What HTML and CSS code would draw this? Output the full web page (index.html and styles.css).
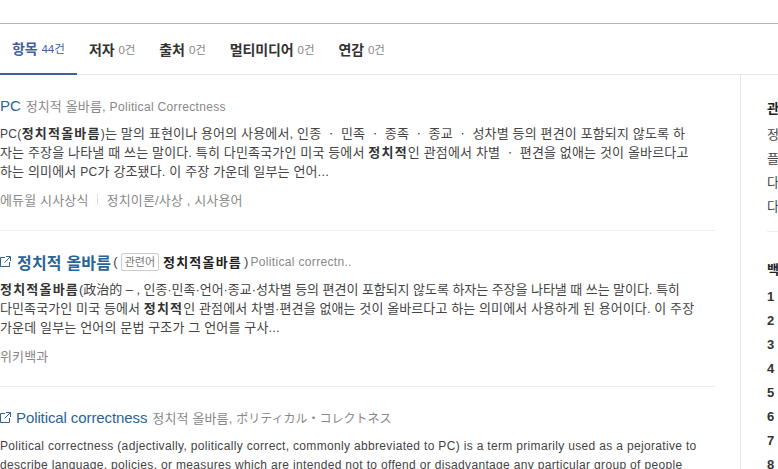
FILE: index.html
```html
<!DOCTYPE html>
<html lang="ko">
<head>
<meta charset="utf-8">
<title>검색 결과</title>
<link rel="stylesheet" href="styles.css">
</head>
<body>
<header class="top"></header>
<nav class="tabs">
  <a class="tab active"><b>항목</b> <span>44건</span></a>
  <a class="tab"><b>저자</b> <span>0건</span></a>
  <a class="tab"><b>출처</b> <span>0건</span></a>
  <a class="tab"><b>멀티미디어</b> <span>0건</span></a>
  <a class="tab"><b>연감</b> <span>0건</span></a>
</nav>
<div class="layout">
  <main class="results">
    <article class="item">
      <h3 class="title"><a class="plain">PC</a><span class="sub">정치적 올바름, <span class="en">Political Correctness</span></span></h3>
      <p class="desc"><span class="en">PC(</span><b>정치적올바름</b><span class="en">)</span>는 말의 표현이나 용어의 사용에서, 인종 ㆍ 민족 ㆍ 종족 ㆍ 종교 ㆍ 성차별 등의 편견이 포함되지 않도록 하<br>자는 주장을 나타낼 때 쓰는 말이다. 특히 다민족국가인 미국 등에서 <b>정치적</b>인 관점에서 차별 ㆍ 편견을 없애는 것이 올바르다고<br>하는 의미에서 <span class="en">PC</span>가 강조됐다. 이 주장 가운데 일부는 언어...</p>
      <p class="source">에듀윌 시사상식<i class="sep"></i>정치이론/사상 , 시사용어</p>
    </article>
    <article class="item">
      <h3 class="title"><svg class="ext" viewBox="0 0 11 11"><path d="M5 1.500H.5v9h9V6M6 .5h4.500V5M10 1 4.500 6.500" fill="none" stroke="#2f6590"/></svg><a class="strong">정치적 올바름</a><span class="paren">(</span><span class="tag">관련어</span><b class="rel">정치적올바름</b><span class="paren">)</span><span class="sub"><span class="en">Political correctn..</span></span></h3>
      <p class="desc"><b>정치적올바름</b><span class="tight">(政治的 – , 인종·민족·언어·종교·성차별 등의 편견이 포함되지 않도록 하자는 주장을 나타낼 때 쓰는 말이다. 특히</span><br><span class="snug">다민족국가인 미국 등에서 </span><b>정치적</b><span class="snug">인 관점에서 차별·편견을 없애는 것이 올바르다고 하는 의미에서 사용하게 된 용어이다. 이 주장</span><br>가운데 일부는 언어의 문법 구조가 그 언어를 구사...</p>
      <p class="source">위키백과</p>
    </article>
    <article class="item">
      <h3 class="title"><svg class="ext" viewBox="0 0 11 11"><path d="M5 1.500H.5v9h9V6M6 .5h4.500V5M10 1 4.500 6.500" fill="none" stroke="#2f6590"/></svg><a class="plain">Political correctness</a><span class="sub">정치적 올바름, <span class="ja">ポリティカル・コレクトネス</span></span></h3>
      <p class="desc en">Political correctness (adjectivally, politically correct, commonly abbreviated to PC) is a term primarily used as a pejorative to<br>describe language, policies, or measures which are intended not to offend or disadvantage any particular group of people</p>
    </article>
  </main>
  <aside class="side">
    <section class="box">
      <h4>관련 항목</h4>
      <p>정치적 올바름</p>
      <p>플로리다</p>
      <p>다문화주의</p>
      <p>다양성</p>
    </section>
    <section class="rank">
      <h4>백과사전</h4>
      <ol>
        <li>1</li><li>2</li><li>3</li><li>4</li><li>5</li><li>6</li><li>7</li><li>8</li>
      </ol>
    </section>
  </aside>
</div>
</body>
</html>
```
FILE: styles.css
```css
* { box-sizing: border-box; }
html, body { margin: 0; height: 469px; overflow: hidden; background: #fff; }
body { font-family: "Liberation Sans", "Noto Sans CJK KR", sans-serif; font-size: 13px; letter-spacing: .15px; color: #444; }
h3, h4, p, ol { margin: 0; padding: 0; font-weight: normal; }
.en { font-size: 12px; letter-spacing: .33px; }
.ja { font-size: 12px; letter-spacing: 0; font-family: "Noto Sans CJK JP", sans-serif; }
.tight { letter-spacing: -.05px; }
.snug { letter-spacing: .1px; }
.top { height: 24px; border-bottom: 1px solid #b4b4b4; }
.tabs { display: flex; height: 51px; border-bottom: 1px solid #e5e5e5; }
.tab { display: flex; align-items: center; gap: 4px; height: 51px; padding: 0 12px 2px; font-size: 11.500px; letter-spacing: -.1px; white-space: nowrap; color: #888; flex: none; }
.tab b { font-size: 14px; color: #333; }
.tab.active { width: 77px; border-bottom: 2px solid #3f5ea3; color: #3f5ea3; }
.tab.active b { color: #3f5ea3; }
.layout { display: flex; height: 394px; }
.results { width: 741px; padding: 0 25px 0 0; border-right: 1px solid #e5e5e5; flex: none; overflow: hidden; }
.item { border-bottom: 1px solid #eee; padding: 21px 0 19px; height: 156px; }
.item:last-child { border-bottom: 0; }
.item:last-child .desc { margin-top: 10px; }
.title { display: flex; align-items: center; height: 19px; font-size: 14px; white-space: pre; color: #2f6590; }
.plain { color: #2a6496; font-size: 15px; letter-spacing: -.1px; }
.strong { color: #2a6496; font-size: 16px; letter-spacing: .2px; font-weight: bold; margin-left: 1px; }
.sub { font-size: 13px; color: #888; margin-left: 5px; }
.ext { width: 11px; height: 11px; margin-right: 5px; flex: none; }
.paren { color: #444; font-size: 13px; margin-left: 2px; }
.paren + .sub { margin-left: 2px; }
.tag { border: 1px solid #ccc; border-radius: 2px; height: 18px; line-height: 16px; padding: 0 3px; margin: 0 4px 0 3px; font-size: 11px; letter-spacing: 0; color: #777; }
.rel { color: #222; font-size: 13px; letter-spacing: 1.2px; }
.desc { margin-top: 9px; height: 57px; line-height: 19px; white-space: nowrap; }
.desc span, .desc b { line-height: 1; }
.desc b { color: #333; letter-spacing: 1.2px; }
.source { margin-top: 10px; line-height: 19px; color: #888; }
.sep { display: inline-block; width: 1px; height: 11px; margin: 0 9px 0 8px; background: #ddd; }
.side { padding: 24px 0 0 26px; width: 37px; overflow: hidden; flex: none; white-space: nowrap; }
.side h4 { font-weight: bold; font-size: 13px; color: #222; line-height: 19px; }
.box { width: 200px; padding-bottom: 12px; border-bottom: 1px solid #eee; }
.box p { line-height: 24px; }
.box h4 { margin-bottom: 5px; }
.rank { margin-top: 28px; width: 200px; }
.rank ol { list-style: none; margin-top: 6px; }
.rank li { line-height: 24px; font-size: 13px; font-weight: bold; color: #333; }
```
